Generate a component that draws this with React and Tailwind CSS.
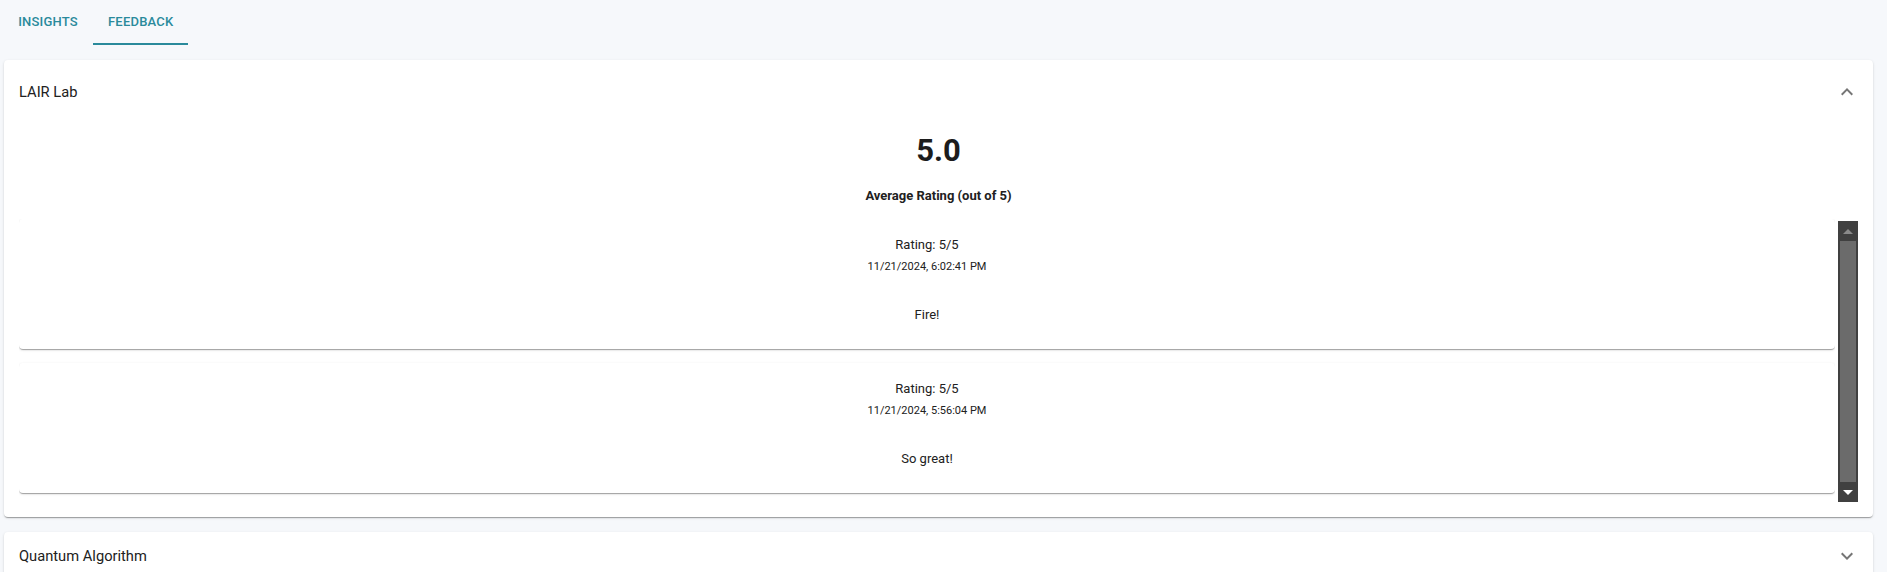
import React, { useState } from 'react';

const FEEDBACK = [
  { rating: 5, time: '11/21/2024, 6:02:41 PM', comment: 'Fire!' },
  { rating: 5, time: '11/21/2024, 5:56:04 PM', comment: 'So great!' },
];

function Chevron({ up }) {
  return (
    <svg width="24" height="24" viewBox="0 0 24 24" className={up ? 'rotate-180' : ''}>
      <path d="M16.59 8.59 12 13.17 7.41 8.59 6 10l6 6 6-6z" fill="rgba(0,0,0,0.54)" />
    </svg>
  );
}

// fake classic scrollbar, the list in the picture shows one
function ScrollBar() {
  return (
    <div className="w-[20px] ml-[3px] mt-[2px] h-[281px] bg-[#404040] flex flex-col items-center">
      <div className="h-[20px] flex items-center justify-center">
        <div className="w-0 h-0 border-l-[5px] border-r-[5px] border-b-[5px] border-l-transparent border-r-transparent border-b-[#8a8a8a]" />
      </div>
      <div className="w-[16px] flex-1 bg-[#6b6b6b]" />
      <div className="h-[20px] flex items-center justify-center">
        <div className="w-0 h-0 border-l-[5px] border-r-[5px] border-t-[5px] border-l-transparent border-r-transparent border-t-white" />
      </div>
    </div>
  );
}

function FeedbackItem({ item }) {
  return (
    <div className="h-[130px] mb-[14px] bg-white rounded-[4px] shadow-[0px_2px_1px_-1px_rgba(0,0,0,0.2),0px_1px_1px_0px_rgba(0,0,0,0.14),0px_1px_3px_0px_rgba(0,0,0,0.12)] flex flex-col items-center pt-[16px] text-[#212121]">
      <div className="text-[13px] leading-[20px]">Rating: {item.rating}/5</div>
      <div className="text-[11px] leading-[16px] mt-[4px]">{item.time}</div>
      <div className="text-[13px] leading-[20px] mt-[30px]">{item.comment}</div>
    </div>
  );
}

function Tab({ label, active, onClick }) {
  return (
    <button
      onClick={onClick}
      className={`h-full px-[15px] min-w-[90px] flex items-center justify-center text-[13px] font-medium uppercase tracking-[0.2px] text-[#2a8a9b] border-b-2 ${
        active ? 'border-[#2a8a9b]' : 'border-transparent'
      }`}
    >
      {label}
    </button>
  );
}

export default function App() {
  const [tab, setTab] = useState('feedback');
  const [open, setOpen] = useState({ lair: true, quantum: false });

  return (
    <div className="h-screen overflow-hidden bg-[#f6f8fb] font-['Roboto','Liberation_Sans',sans-serif] text-[#212121]">
      {/* Tabs */}
      <div className="flex h-[45px] pl-[3px]">
        <Tab label="Insights" active={tab === 'insights'} onClick={() => setTab('insights')} />
        <Tab label="Feedback" active={tab === 'feedback'} onClick={() => setTab('feedback')} />
      </div>

      <div className="ml-[4px] mr-[14px] mt-[15px]">
        {/* LAIR Lab */}
        <div className="bg-white rounded-[4px] shadow-[0px_2px_1px_-1px_rgba(0,0,0,0.2),0px_1px_1px_0px_rgba(0,0,0,0.14),0px_1px_3px_0px_rgba(0,0,0,0.12)]">
          <div
            className="h-[64px] flex items-center justify-between pl-[15px] pr-[14px] cursor-pointer"
            onClick={() => setOpen(o => ({ ...o, lair: !o.lair }))}
          >
            <span className="text-[14.7px]">LAIR Lab</span>
            <Chevron up={open.lair} />
          </div>
          {open.lair && (
            <div className="px-[15px] pt-[8px] pb-[15px]">
              <div className="text-[31px] leading-[38px] font-bold text-center text-[#1c1c1c]">5.0</div>
              <div className="mt-[15px] text-[13px] leading-[22px] font-bold text-center">
                Average Rating (out of 5)
              </div>
              <div className="mt-[12px] flex h-[283px]">
                <div className="flex-1 overflow-hidden">
                  {FEEDBACK.map((f, i) => (
                    <FeedbackItem key={i} item={f} />
                  ))}
                </div>
                <ScrollBar />
              </div>
            </div>
          )}
        </div>

        {/* Quantum Algorithm */}
        <div className="mt-[15px] bg-white rounded-[4px] shadow-[0px_2px_1px_-1px_rgba(0,0,0,0.2),0px_1px_1px_0px_rgba(0,0,0,0.14),0px_1px_3px_0px_rgba(0,0,0,0.12)]">
          <div
            className="h-[48px] flex items-center justify-between pl-[15px] pr-[14px] cursor-pointer"
            onClick={() => setOpen(o => ({ ...o, quantum: !o.quantum }))}
          >
            <span className="text-[14.7px]">Quantum Algorithm</span>
            <Chevron up={open.quantum} />
          </div>
        </div>
      </div>
    </div>
  );
}
